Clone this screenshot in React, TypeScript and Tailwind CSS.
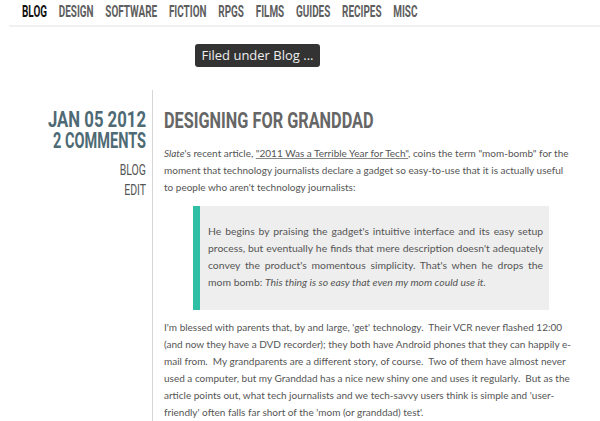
import React from 'react';

const navItems = ['BLOG', 'DESIGN', 'SOFTWARE', 'FICTION', 'RPGS', 'FILMS', 'GUIDES', 'RECIPES', 'MISC'];

// no condensed face installed, so squeeze Roboto horizontally
const heading = "font-['Roboto',sans-serif]";

const quoteLines = [
    "He begins by praising the gadget's intuitive interface and its easy setup",
    "process, but eventually he finds that mere description doesn't adequately",
    "convey the product's momentous simplicity. That's when he drops the",
];

const App: React.FC = () => {
    return (
        <div className="w-[600px] h-[421px] overflow-hidden bg-white">
            {/* top nav */}
            <nav className="pl-[22px] pt-[2px] h-[25px]">
                <ul
                    className={`flex gap-[19px] origin-left scale-x-[0.62] text-[16px] leading-[19px] font-bold whitespace-nowrap ${heading}`}
                >
                    {navItems.map((item, i) => (
                        <li key={item} className={i === 0 ? 'text-[#111]' : 'text-[#5e5e5e]'}>
                            {item}
                        </li>
                    ))}
                </ul>
            </nav>
            <div className="ml-[9px] h-[2px] bg-[#f0f0f0]" />

            <div className="mt-[17px] ml-[195px] w-[125px] h-[23px] rounded-[3px] bg-[#333] text-[#eee] text-[13px] leading-[23px] text-center font-['Open_Sans',sans-serif]">
                Filed under Blog ...
            </div>

            {/* post */}
            <div className="mt-[23px] flex">
                <aside className={`w-[146px] pt-[19px] text-right whitespace-nowrap ${heading}`}>
                    <div className="origin-right scale-x-[0.76] text-[#4e6a74] text-[22px] leading-[21px] font-bold">
                        JAN 05 2012
                    </div>
                    <div className="origin-right scale-x-[0.66] text-[#4e6a74] text-[22px] leading-[21px] font-bold">
                        2 COMMENTS
                    </div>
                    <div className="origin-right scale-x-[0.7] mt-[9px] text-[#555] text-[15px] leading-[20px]">BLOG</div>
                    <div className="origin-right scale-x-[0.7] text-[#555] text-[15px] leading-[20px]">EDIT</div>
                </aside>
                <article className="ml-[6px] pl-[11px] border-l border-[#d6d6d6] w-[440px] pt-[19px] pb-[20px]">
                    <h1 className={`origin-left scale-x-[0.74] whitespace-nowrap text-[#666] text-[22px] leading-[24px] font-bold ${heading}`}>
                        DESIGNING FOR GRANDDAD
                    </h1>
                    <div className="mt-[12px] w-[430px] text-[#555] text-[10px] leading-[17px] font-['Lato',sans-serif]">
                        <p>
                            <em>Slate</em>'s recent article,{' '}
                            <a className="underline decoration-[#888]">"2011 Was a Terrible Year for Tech"</a>, coins the
                            term "mom-bomb" for the
                            <br />
                            moment that technology journalists declare a gadget so easy-to-use that it is actually useful
                            <br />
                            to people who aren't technology journalists:
                        </p>
                        <blockquote className="mt-[10px] ml-[29px] w-[356px] bg-[#eee] border-l-[7px] border-[#2ebfa5] pl-[8px] pr-[6px] pt-[17px] pb-[19px] text-[10.4px]">
                            {quoteLines.map((line) => (
                                <span key={line} className="block whitespace-nowrap [text-align-last:justify]">
                                    {line}
                                </span>
                            ))}
                            <span className="block">
                                mom bomb: <em>This thing is so easy that even my mom could use it.</em>
                            </span>
                        </blockquote>
                        <p className="mt-[9px]">
                            I'm blessed with parents that, by and large, 'get' technology.&nbsp; Their VCR never flashed 12:00
                            <br />
                            (and now they have a DVD recorder); they both have Android phones that they can happily e-
                            <br />
                            mail from.&nbsp; My grandparents are a different story, of course.&nbsp; Two of them have almost never
                            <br />
                            used a computer, but my Granddad has a nice new shiny one and uses it regularly.&nbsp; But as the
                            <br />
                            article points out, what tech journalists and we tech-savvy users think is simple and 'user-
                            <br />
                            friendly' often falls far short of the 'mom (or granddad) test'.
                        </p>
                    </div>
                </article>
            </div>
        </div>
    );
};

export default App;
